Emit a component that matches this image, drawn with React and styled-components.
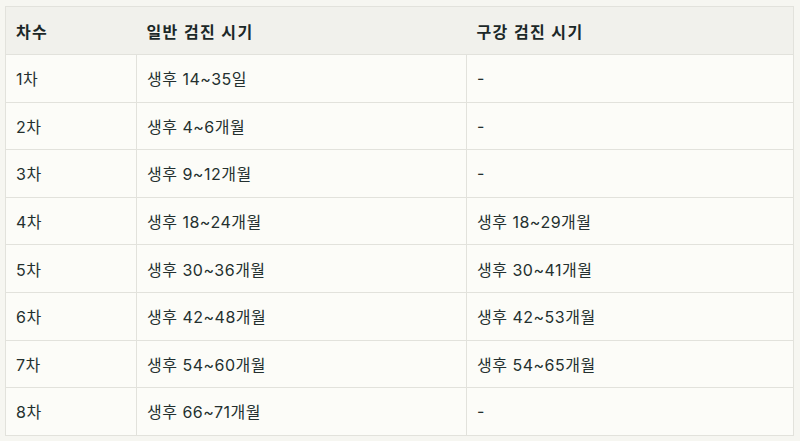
import React from 'react';
import styled, { createGlobalStyle } from 'styled-components';

const rows = [
    ['1차', '생후 14~35일', '-'],
    ['2차', '생후 4~6개월', '-'],
    ['3차', '생후 9~12개월', '-'],
    ['4차', '생후 18~24개월', '생후 18~29개월'],
    ['5차', '생후 30~36개월', '생후 30~41개월'],
    ['6차', '생후 42~48개월', '생후 42~53개월'],
    ['7차', '생후 54~60개월', '생후 54~65개월'],
    ['8차', '생후 66~71개월', '-'],
];

const GlobalStyle = createGlobalStyle`
    body {
        margin: 0;
        background: #f6f6f1;
        font-family: Inter, "Noto Sans CJK KR", sans-serif;
        color: #24302f;
    }
`;

export default function App() {
    return (
        <Page>
            <GlobalStyle />
            <Table>
                <colgroup>
                    <col style={{ width: 131 }} />
                    <col style={{ width: 330 }} />
                    <col />
                </colgroup>
                <thead>
                    <tr>
                        <Th>차수</Th>
                        <Th>일반 검진 시기</Th>
                        <Th>구강 검진 시기</Th>
                    </tr>
                </thead>
                <tbody>
                    {rows.map((row) => (
                        <tr key={row[0]}>
                            {row.map((cell, i) => (
                                <Td key={i}>{cell}</Td>
                            ))}
                        </tr>
                    ))}
                </tbody>
            </Table>
        </Page>
    );
}

const Page = styled.div`
    padding: 6px 6px 0 5px;
`;

const Table = styled.table`
    width: 100%;
    border-collapse: collapse;
    table-layout: fixed;
    border: 1px solid #e2e2dc;
    font-size: 16px;
`;

const Th = styled.th`
    background: #f1f1ec;
    color: #1c2828;
    text-align: left;
    font-weight: 700;
    height: 47px;
    padding: 0 10px;
    border-bottom: 1px solid #e2e2dc;
    letter-spacing: 1.4px;
`;

const Td = styled.td`
    background: #fcfcf8;
    height: 46.6px;
    padding: 0 10px;
    border: 1px solid #e2e2dc;
    letter-spacing: 0.5px;
`;
